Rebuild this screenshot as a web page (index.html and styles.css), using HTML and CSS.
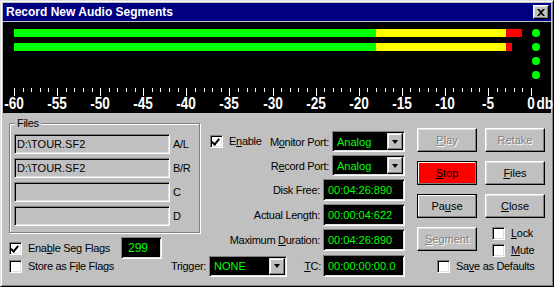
FILE: index.html
```html
<!DOCTYPE html>
<html lang="en">
<head>
  <meta charset="UTF-8">
  <title>Record New Audio Segments</title>
  <link rel="stylesheet" href="styles.css">
</head>
<body>

  <div class="window">
    <div class="windowInner">

      <div class="titleBar">
        <span class="title">Record New Audio Segments</span>
        <div class="closeBtn">
          <svg width="8" height="7" viewBox="0 0 8 7"><path d="M0 0h2l2 2 2-2h2L5 3.5 8 7H6L4 5 2 7H0l3-3.5z" fill="#000"/></svg>
        </div>
      </div>

      <div class="meter">
        <div class="meterTop">
          <div class="bars">
            <div class="bar">
              <span class="seg green" style="width:362px"></span>
              <span class="seg yellow" style="width:130px"></span>
              <span class="seg red" style="width:16px"></span>
            </div>
            <div class="bar">
              <span class="seg green" style="width:362px"></span>
              <span class="seg yellow" style="width:130px"></span>
              <span class="seg red" style="width:6px"></span>
            </div>
          </div>
          <div class="dots">
            <span class="dot"></span>
            <span class="dot"></span>
            <span class="dot"></span>
            <span class="dot"></span>
          </div>
        </div>
        <div id="scale" class="scale"></div>
      </div>

      <div class="panel">
        <div class="upper">

          <div class="leftCol">
            <fieldset class="files">
              <legend>Files</legend>
              <div class="fileRow"><div class="field">D:\TOUR.SF2</div><span>A/L</span></div>
              <div class="fileRow"><div class="field">D:\TOUR.SF2</div><span>B/R</span></div>
              <div class="fileRow"><div class="field"></div><span>C</span></div>
              <div class="fileRow"><div class="field"></div><span>D</span></div>
            </fieldset>
            <div class="segRow">
              <div class="check"><span class="box checked"></span>Ena<u>b</u>le Seg Flags</div>
              <div class="count">299</div>
            </div>
          </div>

          <div class="midCol">
            <div class="midRow">
              <div class="check enable"><span class="box checked"></span>E<u>n</u>able</div>
              <span>M<u>o</u>nitor Port:</span>
              <div class="select">Analog<span class="selectBtn"></span></div>
            </div>
            <div class="midRow">
              <span>R<u>e</u>cord Port:</span>
              <div class="select">Analog<span class="selectBtn"></span></div>
            </div>
            <div class="midRow">
              <span>Disk Free:</span>
              <div class="lcd">00:04:26:890</div>
            </div>
            <div class="midRow">
              <span>Actual Length:</span>
              <div class="lcd">00:00:04:622</div>
            </div>
            <div class="midRow">
              <span>Maximum <u>D</u>uration:</span>
              <div class="lcd">00:04:26:890</div>
            </div>
          </div>

          <div class="rightCol">
            <div class="btn disabled"><span><u>P</u>lay</span></div>
            <div class="btn disabled"><span>Retake</span></div>
            <div class="btn default stop"><span><u>S</u>top</span></div>
            <div class="btn"><span><u>F</u>iles</span></div>
            <div class="btn default"><span>Pa<u>u</u>se</span></div>
            <div class="btn"><span><u>C</u>lose</span></div>
            <div class="btn disabled"><span><u>S</u>egment</span></div>
            <div class="lockMute">
              <div class="check"><span class="box"></span><u>L</u>ock</div>
              <div class="check"><span class="box"></span><u>M</u>ute</div>
            </div>
          </div>

        </div>

        <div class="bottomRow">
          <div class="check store"><span class="box"></span>Store as F<u>i</u>le Flags</div>
          <div class="trigger">
            <span>Trigger:</span>
            <div class="select wide">NONE<span class="selectBtn"></span></div>
          </div>
          <div class="tc">
            <span><u>T</u>C:</span>
            <div class="lcd">00:00:00:00.0</div>
          </div>
          <div class="check save"><span class="box"></span>Sa<u>v</u>e as Defaults</div>
        </div>
      </div>

    </div>
  </div>

  <script>
    const scale = document.getElementById('scale');
    const span = 517; // pixels from -60 to 0

    for (let db = -60; db <= 0; db++) {
      const x = Math.round((db + 60) * span / 60);
      const tick = document.createElement('div');
      tick.className = db % 5 === 0 ? 'tick major' : 'tick';
      tick.style.left = x + 'px';
      scale.appendChild(tick);

      if (db % 5 === 0) {
        const label = document.createElement('div');
        label.className = 'scaleLabel';
        label.style.left = x + 'px';
        const text = document.createElement('span');
        text.textContent = db;
        if (db === 0) {
          const unit = document.createElement('b');
          unit.className = 'unit';
          unit.textContent = 'db';
          text.appendChild(unit);
        }
        label.appendChild(text);
        scale.appendChild(label);
      }
    }
  </script>

</body>
</html>
```

FILE: styles.css
```css
body {
  margin: 0;
  font-family: "Liberation Sans", Arial, sans-serif;
  font-size: 11px;
  color: #000;
  background-color: #c0c0c0;
}
.window {
  width: 554px;
  height: 287px;
  box-sizing: border-box;
  background-color: #c0c0c0;
  border: 1px solid;
  border-color: #dfdfdf #000 #000 #dfdfdf;
}
.windowInner {
  height: 100%;
  box-sizing: border-box;
  border: 1px solid;
  border-color: #fff #808080 #808080 #fff;
  padding: 1px;
  display: flex;
  flex-direction: column;
}

/* title bar */
.titleBar {
  height: 18px;
  flex-shrink: 0;
  background-color: #000080;
  color: #fff;
  font-weight: bold;
  font-size: 12px;
  display: flex;
  align-items: center;
  padding: 0 2px 0 3px;
  margin-bottom: 1px;
}
.title {
  flex: 1;
}
.closeBtn {
  width: 16px;
  height: 14px;
  box-sizing: border-box;
  background-color: #c0c0c0;
  border: 1px solid;
  border-color: #fff #000 #000 #fff;
  box-shadow: inset -1px -1px #808080, inset 1px 1px #dfdfdf;
  display: flex;
  align-items: center;
  justify-content: center;
}

/* level meter */
.meter {
  height: 91px;
  flex-shrink: 0;
  box-sizing: border-box;
  background-color: #000;
  padding: 7px 0 0 11px;
}
.meterTop {
  display: flex;
  align-items: flex-start;
  height: 59px;
}
.bars {
  width: 517px;
  display: flex;
  flex-direction: column;
  gap: 6px;
}
.bar {
  height: 8px;
  display: flex;
}
.seg.green { background-color: #00ff00; }
.seg.yellow { background-color: #ffff00; }
.seg.red { background-color: #ff0000; }
.dots {
  margin-left: 1px;
  display: flex;
  flex-direction: column;
  gap: 6px;
}
.dot {
  width: 8px;
  height: 8px;
  border-radius: 50%;
  background-color: #00ff00;
}
.scale {
  position: relative;
  height: 24px;
}
.tick {
  position: absolute;
  top: 0;
  width: 1px;
  height: 4px;
  background-color: #fff;
}
.tick.major {
  height: 8px;
}
.scaleLabel {
  position: absolute;
  top: 8px;
  width: 0;
  color: #fff;
  font-weight: bold;
  font-size: 16px;
  line-height: 16px;
  white-space: nowrap;
}
.scaleLabel span {
  position: relative;
  display: inline-block;
  transform: translateX(-50%) scaleX(0.85);
}
.unit {
  position: absolute;
  left: 100%;
  margin-left: 2px;
}

/* lower panel */
.panel {
  flex: 1;
  padding-left: 6px;
  display: flex;
  flex-direction: column;
  letter-spacing: -0.3px;
}
.upper {
  display: flex;
  height: 142px;
}
.leftCol {
  width: 192px;
}
.files {
  width: 191px;
  box-sizing: border-box;
  margin: 4px 0 0;
  padding: 4px 0 6px 4px;
  border: 1px solid #808080;
  box-shadow: 1px 1px 0 #fff, inset 1px 1px 0 #fff;
}
.files legend {
  padding: 0 2px;
  margin-left: 1px;
  line-height: 13px;
  background-color: #c0c0c0;
}
.fileRow {
  display: flex;
  align-items: center;
  gap: 3px;
}
.fileRow + .fileRow {
  margin-top: 4px;
}
.field, .lcd, .select, .count {
  box-sizing: border-box;
  border: 1px solid;
  border-color: #808080 #fff #fff #808080;
  box-shadow: inset 1px 1px #000, inset -1px -1px #dfdfdf;
  display: flex;
  align-items: center;
  letter-spacing: 0;
}
.field {
  width: 156px;
  height: 20px;
  padding: 0 2px;
}
.lcd, .select, .count {
  background-color: #000;
  color: #00ff00;
}
.lcd {
  width: 82px;
  height: 22px;
  padding-left: 4px;
}
.select {
  width: 73px;
  height: 21px;
  padding: 1px 1px 1px 4px;
}
.select.wide {
  width: 78px;
}
.selectBtn {
  margin-left: auto;
  width: 16px;
  height: 17px;
  box-sizing: border-box;
  background-color: #c0c0c0;
  border: 1px solid;
  border-color: #dfdfdf #000 #000 #dfdfdf;
  box-shadow: inset -1px -1px #808080, inset 1px 1px #fff;
  display: flex;
  align-items: center;
  justify-content: center;
}
.selectBtn::after {
  content: "";
  border-left: 3.5px solid transparent;
  border-right: 3.5px solid transparent;
  border-top: 4px solid #000;
}
.segRow {
  width: 153px;
  height: 22px;
  margin-top: 4px;
  display: flex;
  align-items: center;
}
.count {
  margin-left: auto;
  width: 41px;
  height: 22px;
  padding-left: 6px;
  font-size: 12px;
}

/* checkboxes */
.check {
  display: flex;
  align-items: center;
  line-height: 13px;
  white-space: nowrap;
}
.box {
  width: 13px;
  height: 13px;
  flex-shrink: 0;
  box-sizing: border-box;
  margin-right: 6px;
  background-color: #fff;
  border: 1px solid;
  border-color: #808080 #fff #fff #808080;
  box-shadow: inset 1px 1px #000, inset -1px -1px #dfdfdf;
  position: relative;
}
.box.checked::after {
  content: "";
  position: absolute;
  left: 2px;
  top: 1px;
  width: 3px;
  height: 6px;
  border: solid #000;
  border-width: 0 2px 2px 0;
  transform: rotate(40deg);
}

/* middle column */
.midCol {
  width: 204px;
  padding-top: 18px;
  display: flex;
  flex-direction: column;
  gap: 3px;
}
.midRow {
  display: flex;
  align-items: center;
  justify-content: flex-end;
  gap: 3px;
}
.enable {
  margin-left: 9px;
  margin-right: auto;
}

/* buttons */
.rightCol {
  margin-left: 12px;
  padding-top: 15px;
  display: grid;
  grid-template-columns: 60px 60px;
  grid-auto-rows: min-content;
  column-gap: 8px;
  row-gap: 9px;
}
.btn {
  height: 24px;
  box-sizing: border-box;
  background-color: #c0c0c0;
  border: 1px solid;
  border-color: #fff #000 #000 #fff;
  box-shadow: inset -1px -1px #808080, inset 1px 1px #dfdfdf;
  display: flex;
  align-items: center;
  justify-content: center;
  letter-spacing: 0;
}
.btn.default {
  border-color: #000;
  box-shadow: inset -1px -1px #808080, inset 1px 1px #fff;
}
.btn.stop {
  background-color: #ff0000;
}
.btn.disabled {
  color: #808080;
  text-shadow: 1px 1px 0 #fff;
}
.lockMute {
  padding-left: 7px;
  display: flex;
  flex-direction: column;
  gap: 4px;
}

/* bottom row */
.bottomRow {
  height: 22px;
  display: flex;
  align-items: center;
}
.store {
  width: 162px;
}
.trigger {
  width: 116px;
  display: flex;
  align-items: center;
  justify-content: space-between;
}
.tc {
  width: 118px;
  display: flex;
  align-items: center;
  justify-content: flex-end;
  gap: 2px;
}
.save {
  margin-left: 32px;
}
```
